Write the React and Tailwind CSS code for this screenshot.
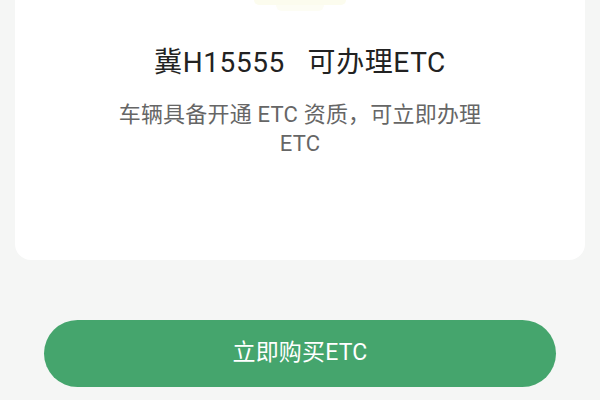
export default function App() {
  const font = { fontFamily: 'Roboto, "Noto Sans CJK SC", "Noto Sans", sans-serif' };
  return (
    <div className="w-[600px] h-[400px] bg-[#f5f6f5] overflow-hidden flex flex-col" style={font}>
      <div className="mx-[15px] h-[260px] bg-white rounded-b-[16px] flex flex-col items-center">
        {/* base of the header illustration */}
        <div className="flex flex-col items-center">
          <div className="w-[92px] h-[5px] bg-[#fcfcee] rounded-b-[6px]" />
          <div className="w-[48px] h-[6px] bg-[#fdfdf4] rounded-b-[6px]" />
        </div>
        <h1 className="mt-[32px] text-[28px] leading-[40px] text-[#222] tracking-[0.6px] whitespace-nowrap">
          冀H15555&nbsp;&nbsp;&nbsp;可办理ETC
        </h1>
        <p className="mt-[17px] w-[384px] text-center text-[22px] leading-[29px] text-[#666] tracking-[0.2px]">
          车辆具备开通 ETC 资质，可立即办理ETC
        </p>
      </div>
      <button className="mt-[60px] mx-[44px] h-[67px] rounded-full bg-[#45a56d] text-white text-[23px] tracking-[0.2px]">
        立即购买ETC
      </button>
    </div>
  );
}
